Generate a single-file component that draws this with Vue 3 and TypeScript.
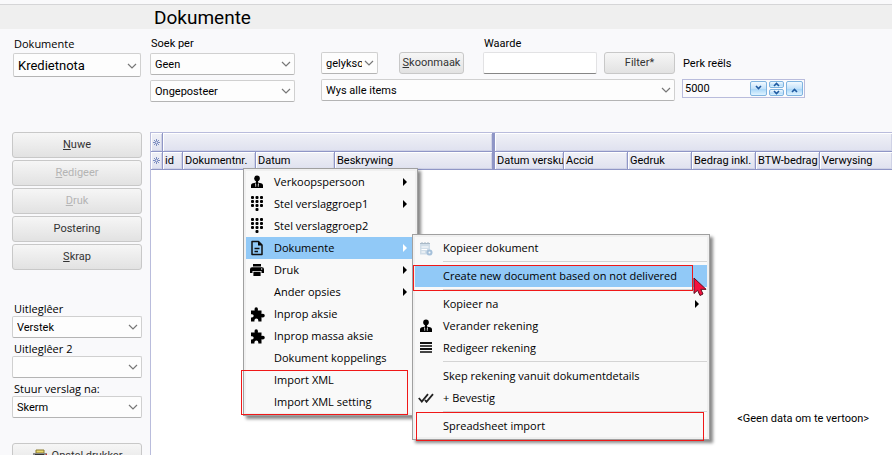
<script setup lang="ts">
import { ref } from 'vue'

interface ActionButton {
  key: string
  rest: string
  disabled?: boolean
}

interface MenuItem {
  label: string
  icon?: string
  arrow?: boolean
  active?: boolean
  divider?: boolean
}

const limit = ref('5000')
const searchValue = ref('')

const actions: ActionButton[] = [
  { key: 'N', rest: 'uwe' },
  { key: 'R', rest: 'edigeer', disabled: true },
  { key: 'D', rest: 'ruk', disabled: true },
  { key: '', rest: 'Postering' },
  { key: 'S', rest: 'krap' },
]

const reportFields = [
  { id: 'layout', label: 'Uitleglêer', value: 'Verstek' },
  { id: 'layout2', label: 'Uitleglêer 2', value: '' },
  { id: 'target', label: 'Stuur verslag na:', value: 'Skerm' },
]

const columns = [
  { label: 'id', cls: 'w-id' },
  { label: 'Dokumentnr.', cls: 'w-nr' },
  { label: 'Datum', cls: 'w-date' },
  { label: 'Beskrywing', cls: 'w-desc' },
  { label: 'Datum versku', cls: 'w-due' },
  { label: 'Accid', cls: 'w-std' },
  { label: 'Gedruk', cls: 'w-std' },
  { label: 'Bedrag inkl.', cls: 'w-std' },
  { label: 'BTW-bedrag', cls: 'w-std' },
  { label: 'Verwysing', cls: 'w-rest' },
]

const mainMenu: MenuItem[] = [
  { label: 'Verkoopspersoon', icon: 'person', arrow: true },
  { label: 'Stel verslaggroep1', icon: 'dots', arrow: true },
  { label: 'Stel verslaggroep2', icon: 'dots' },
  { label: 'Dokumente', icon: 'doc', arrow: true, active: true },
  { label: 'Druk', icon: 'print', arrow: true },
  { label: 'Ander opsies', arrow: true },
  { label: 'Inprop aksie', icon: 'plugin' },
  { label: 'Inprop massa aksie', icon: 'plugin' },
  { label: 'Dokument koppelings' },
  { label: 'Import XML' },
  { label: 'Import XML setting' },
]

const subMenu: MenuItem[] = [
  { label: 'Kopieer dokument', icon: 'copy' },
  { label: 'Create new document based on not delivered', active: true, divider: true },
  { label: 'Kopieer na', arrow: true, divider: true },
  { label: 'Verander rekening', icon: 'person' },
  { label: 'Redigeer rekening', icon: 'lines' },
  { label: 'Skep rekening vanuit dokumentdetails', divider: true },
  { label: '+ Bevestig', icon: 'checks' },
  { label: 'Spreadsheet import', divider: true },
]

const menus = [
  { name: 'main', items: mainMenu },
  { name: 'sub', items: subMenu },
]
</script>

<template>
  <div class="page">
    <svg class="defs" width="0" height="0" aria-hidden="true">
      <symbol id="i-chev" viewBox="0 0 10 6">
        <path d="M1 1l4 4 4-4" fill="none" stroke="#777" stroke-width="1.2" />
      </symbol>
      <symbol id="i-person" viewBox="0 0 14 14">
        <circle cx="7" cy="3.4" r="2.8" />
        <path d="M1 13V10.5Q1 8.4 4.2 8L6 7.4V6h2v1.4L9.8 8Q13 8.4 13 10.5V13Z" />
        <path d="M5 8L7 10 9 8 8.400 12H5.600Z" fill="#f9f9f9" />
        <path d="M6.300 8.500h1.400L8 12.500H6Z" />
      </symbol>
      <symbol id="i-dots" viewBox="0 0 14 16">
        <g>
          <rect x="1" y="0" width="3" height="3" rx="1" /><rect x="5.5" y="0" width="3" height="3" rx="1" /><rect x="10" y="0" width="3" height="3" rx="1" />
          <rect x="1" y="4" width="3" height="3" rx="1" /><rect x="5.5" y="4" width="3" height="3" rx="1" /><rect x="10" y="4" width="3" height="3" rx="1" />
          <rect x="1" y="8" width="3" height="3" rx="1" /><rect x="5.5" y="8" width="3" height="3" rx="1" /><rect x="10" y="8" width="3" height="3" rx="1" />
          <rect x="5.5" y="12" width="3" height="3" rx="1" />
        </g>
      </symbol>
      <symbol id="i-doc" viewBox="0 0 14 16">
        <path d="M2 1.500H8.500L12 5V14.500H2Z" fill="none" stroke="#111" stroke-width="1.5" stroke-linejoin="round" />
        <path d="M8 1.500v4h4Z" />
        <path d="M4.500 8.500H9.500M4.500 11.500H8" stroke="#111" stroke-width="1.4" />
      </symbol>
      <symbol id="i-print" viewBox="0 0 14 12">
        <path d="M3 0h8v2.500H3ZM2 3.200h10Q14 3.200 14 5.200V9H11.500V7H2.500V9H0V5.200Q0 3.200 2 3.200ZM3.400 7.800h7.200V12H3.400Z" />
        <circle cx="11.700" cy="5" r="0.700" fill="#fff" />
      </symbol>
      <symbol id="i-plugin" viewBox="0 0 15 15">
        <path d="M1 3.500H4.700Q4 .5 6.200.3 8.500.5 7.800 3.500H11.500V7Q14.800 6.200 14.800 8.700 14.600 11 11.500 10.300V14.500H8.300Q8.700 11.700 6.400 11.600 4 11.700 4.500 14.500H1V10.500Q3.600 11 3.700 8.800 3.600 6.700 1 7.300Z" />
      </symbol>
      <symbol id="i-copy" viewBox="0 0 14 15">
        <path d="M1 2.500H11V13.500H1Z" fill="#d0dde8" />
        <path d="M1 2.500H11M3 1v2M6 1v2M9 1v2" stroke="#a9b9c7" />
        <path d="M2.500 6H9.500M2.500 8.500H8M2.500 11H6" stroke="#fff" />
        <circle cx="10.500" cy="11.500" r="3" fill="#a5c0da" />
        <circle cx="10.500" cy="11.500" r="1" fill="#f4f7fa" />
      </symbol>
      <symbol id="i-lines" viewBox="0 0 12 12">
        <path d="M0 1H12M0 7H12" stroke="#111" stroke-width="2" />
        <path d="M0 4H12M0 10H12" stroke="#444" stroke-width="2" />
      </symbol>
      <symbol id="i-checks" viewBox="0 0 16 10">
        <path d="M.8 5L3.800 8.500 10 1.200M7 7L8.500 8.800 15 1.200" fill="none" stroke="#222" stroke-width="1.8" />
      </symbol>
      <symbol id="i-star" viewBox="0 0 9 9">
        <path d="M4.500 0V9M0 4.500H9M1.300 1.300L7.700 7.700M7.700 1.300L1.300 7.700" stroke="#5a70b0" stroke-width="1" />
        <circle cx="4.500" cy="4.500" r="1.200" fill="#e9eaf5" />
      </symbol>
    </svg>

    <header class="titlebar"><h1>Dokumente</h1></header>

    <section class="filters">
      <div class="field doc-type">
        <label class="ui" for="doctype">Dokumente</label>
        <div class="select tall">
          <select id="doctype"><option>Kredietnota</option></select>
          <svg><use href="#i-chev" /></svg>
        </div>
      </div>

      <div class="field search-by">
        <label for="searchby">Soek per</label>
        <div class="select">
          <select id="searchby"><option>Geen</option></select>
          <svg><use href="#i-chev" /></svg>
        </div>
        <div class="select second">
          <select aria-label="Status"><option>Ongeposteer</option></select>
          <svg><use href="#i-chev" /></svg>
        </div>
      </div>

      <div class="criteria">
        <div class="criteria-row">
          <div class="select operator">
            <select aria-label="Operator"><option>gelykso</option></select>
            <svg><use href="#i-chev" /></svg>
          </div>
          <button class="btn clear" type="button"><span><u>S</u>koonmaak</span></button>
          <div class="value">
            <label for="value">Waarde</label>
            <input id="value" v-model="searchValue" type="text" />
          </div>
          <button class="btn filter" type="button">Filter*</button>
        </div>
        <div class="select second">
          <select aria-label="Items"><option>Wys alle items</option></select>
          <svg><use href="#i-chev" /></svg>
        </div>
      </div>

      <div class="limit">
        <label for="limit">Perk reëls</label>
        <div class="spin">
          <input id="limit" v-model="limit" type="text" />
          <button type="button" class="sp" aria-label="Minder">
            <svg viewBox="0 0 15 13"><path d="M5 4L7.500 6.500 10 4" /></svg>
          </button>
          <span class="pair">
            <button type="button" class="sp" aria-label="Op"><svg viewBox="0 0 13 5"><path d="M4 4L6.500 1.500 9 4" /></svg></button>
            <button type="button" class="sp" aria-label="Af"><svg viewBox="0 0 13 5"><path d="M4 1L6.500 3.500 9 1" /></svg></button>
          </span>
          <button type="button" class="sp" aria-label="Meer">
            <svg viewBox="0 0 15 13"><path d="M5 10L7.500 7.500 10 10" /></svg>
          </button>
        </div>
      </div>
    </section>

    <main class="content">
      <aside class="side">
        <div class="actions">
          <button v-for="a in actions" :key="a.rest" class="btn" type="button" :disabled="a.disabled">
            <span><u>{{ a.key }}</u>{{ a.rest }}</span>
          </button>
        </div>
        <div class="reports">
          <div v-for="f in reportFields" :key="f.id" class="report">
            <label class="ui" :for="f.id">{{ f.label }}</label>
            <div class="select">
              <select :id="f.id"><option>{{ f.value }}</option></select>
              <svg><use href="#i-chev" /></svg>
            </div>
          </div>
        </div>
        <button class="btn printer" type="button">
          <svg viewBox="0 0 16 14">
            <path d="M4 1h8v3H4Z" fill="#e9d86c" stroke="#8a7a30" />
            <path d="M1 4h14v7H1Z" fill="#8a8a8a" />
            <path d="M3 5h9v5H3Z" fill="#333" />
            <path d="M3 10h10v3H3Z" fill="#ccc" />
            <path d="M14 5h1v1h-1Z" fill="#d22" />
          </svg>
          <span>Opstel drukker</span>
        </button>
      </aside>

      <div class="grid">
        <table>
          <colgroup>
            <col class="w-star" />
            <col v-for="c in columns" :key="c.label" :class="c.cls" />
          </colgroup>
          <thead>
            <tr>
              <th class="star"><svg><use href="#i-star" /></svg></th>
              <th colspan="4" class="band-end"></th>
              <th colspan="6"></th>
            </tr>
            <tr>
              <th class="star"><svg><use href="#i-star" /></svg></th>
              <th v-for="(c, i) in columns" :key="c.label" :class="{ 'band-end': i === 3 }">
                <div class="cell">{{ c.label }}</div>
              </th>
            </tr>
          </thead>
          <tbody>
            <tr><td colspan="11" class="empty">&lt;Geen data om te vertoon&gt;</td></tr>
          </tbody>
        </table>
      </div>
    </main>

    <div v-for="m in menus" :key="m.name" class="menu" :class="m.name" role="menu">
      <template v-for="item in m.items" :key="item.label">
        <hr v-if="item.divider" />
        <button class="item" :class="{ active: item.active }" type="button" role="menuitem">
          <span class="icon">
            <svg v-if="item.icon" :class="item.icon"><use :href="'#i-' + item.icon" /></svg>
          </span>
          <span class="text">{{ item.label }}</span>
          <svg v-if="item.arrow" class="arrow" viewBox="0 0 4 8"><path d="M0 0L4 4 0 8Z" /></svg>
        </button>
      </template>
    </div>

    <div class="mark mark-xml"></div>
    <div class="mark mark-create"></div>
    <div class="mark mark-sheet"></div>
    <svg class="pointer" viewBox="0 0 14 20">
      <path d="M1 1V16.500L4.600 13.300 7 18.500 10 17 7.800 12.300H13Z" fill="#f5103c" stroke="#5a1020" />
    </svg>
  </div>
</template>

<style>
body {
  margin: 0;
  background: #f9f9fb;
}
</style>

<style scoped>
.page {
  position: relative;
  display: flex;
  flex-direction: column;
  height: 100vh;
  box-sizing: border-box;
  padding-top: 4px;
  overflow: hidden;
  background: #f9f9fb;
  color: #000;
  font: 11px/14px Roboto, "Liberation Sans", sans-serif;
}
.page * {
  box-sizing: border-box;
}
.defs {
  position: absolute;
}
button,
input,
select {
  margin: 0;
  font: inherit;
  color: inherit;
}
.titlebar {
  flex: none;
  height: 25px;
  padding-left: 154px;
  border-top: 1px solid #d5d5d7;
  background: #efefef;
}
h1 {
  margin: 0;
  font-size: 19px;
  font-weight: 400;
  line-height: 25px;
}
label {
  display: block;
  white-space: nowrap;
}
.ui {
  font-family: "Open Sans", "Noto Sans", sans-serif;
}
.filters {
  flex: none;
  display: flex;
  align-items: flex-start;
  height: 103px;
  padding: 8px 0 0 13px;
}
.field label {
  height: 16px;
  padding-left: 1px;
}
.doc-type {
  width: 128px;
  margin-right: 9px;
}
.search-by {
  width: 145px;
  margin-right: 26px;
}
.select {
  position: relative;
  height: 22px;
}
.select select {
  display: block;
  width: 100%;
  height: 100%;
  padding: 1px 20px 0 4px;
  appearance: none;
  border: 1px solid #d0d0d0;
  border-bottom-color: #b4b4b4;
  border-radius: 2px;
  background: #fdfdfd;
}
.select svg {
  position: absolute;
  right: 4px;
  top: 8px;
  width: 10px;
  height: 6px;
  pointer-events: none;
}
.tall {
  height: 24px;
}
.tall select {
  font-size: 13px;
}
.tall svg {
  top: 10px;
}
.second {
  margin-top: 5px;
}
.criteria {
  width: 354px;
  margin-right: 7px;
}
.criteria-row {
  display: flex;
  align-items: flex-end;
}
.operator {
  width: 57px;
  margin-right: 21px;
}
.operator select {
  padding-right: 15px;
}
.btn {
  display: flex;
  align-items: center;
  justify-content: center;
  height: 22px;
  padding: 0;
  border: 1px solid #c8c8c8;
  border-radius: 3px;
  background: linear-gradient(#f6f6f6, #e2e2e2);
  color: #333;
}
.btn:disabled {
  color: #b4b4b4;
}
.clear {
  width: 65px;
  margin-right: 19px;
}
.value {
  flex: 1;
  margin-right: 7px;
}
.value label {
  height: 15px;
  padding-left: 1px;
}
.value input {
  display: block;
  width: 100%;
  height: 22px;
  padding: 0 4px;
  border: 1px solid #e2e2e4;
  border-bottom-color: #868686;
  border-radius: 2px;
  background: #fff;
}
.filter {
  width: 71px;
}
.limit {
  width: 123px;
  padding-top: 20px;
}
.limit label {
  height: 22px;
  padding-left: 1px;
}
.spin {
  display: flex;
  align-items: center;
  gap: 2px;
  height: 19px;
  padding-right: 1px;
  border: 1px solid #b9bcdc;
  background: #fbfbfd;
}
.spin input {
  flex: 1;
  min-width: 0;
  height: 17px;
  padding: 0 2px;
  border: 0;
  background: transparent;
}
.sp {
  display: block;
  width: 17px;
  height: 15px;
  padding: 0;
  border: 1px solid #7fb4e0;
  border-radius: 2px;
  background: linear-gradient(#f2faff, #c4e2fa 50%, #a8d6f8 55%, #e0f4ff);
}
.sp svg {
  display: block;
  width: 100%;
  height: 100%;
}
.sp path {
  fill: none;
  stroke: #1f5aa0;
  stroke-width: 1.6;
}
.pair {
  display: grid;
  gap: 1px;
}
.pair .sp {
  width: 15px;
  height: 7px;
}
.content {
  flex: 1;
  display: flex;
  min-height: 0;
}
.side {
  flex: none;
  width: 150px;
  padding: 0 8px 0 12px;
}
.actions {
  display: grid;
  gap: 2px;
}
.actions .btn {
  height: 26px;
}
.reports {
  display: grid;
  gap: 4px;
  padding-top: 32px;
}
.report label {
  height: 14px;
  padding-left: 2px;
}
.report {
  height: 36px;
}
.printer {
  gap: 4px;
  width: 100%;
  height: 26px;
  margin-top: 25px;
}
.printer svg {
  width: 16px;
  height: 14px;
}
.grid {
  flex: 1;
  min-width: 0;
  border-top: 1px solid #b9bcdc;
  border-left: 1px solid #b9bcdc;
  background: #fff;
}
table {
  width: 100%;
  table-layout: fixed;
  border-collapse: separate;
  border-spacing: 0;
}
.w-star { width: 12px; }
.w-id { width: 20px; }
.w-nr { width: 73px; }
.w-date { width: 79px; }
.w-desc { width: 160px; }
.w-due { width: 69px; }
.w-std { width: 64px; }
th {
  height: 19px;
  padding: 0;
  overflow: hidden;
  border-right: 1px solid #8f96c6;
  border-bottom: 1px solid #8f96c6;
  background: linear-gradient(#f0f1f7, #dfe1ef);
  box-shadow: inset 1px 1px #fff, inset -1px -1px #cfd2e6;
  font-weight: 400;
  text-align: left;
}
thead tr + tr th {
  height: 18px;
}
th:last-child {
  border-right: 0;
}
.band-end {
  border-right-width: 3px;
}
.star svg {
  display: block;
  width: 7px;
  height: 7px;
  margin: 0 auto;
}
.cell {
  margin: 0 0 0 2px;
  overflow: hidden;
  white-space: nowrap;
}
.empty {
  padding: 242px 23px 0 0;
  text-align: right;
}
.menu {
  position: absolute;
  padding: 2px;
  border: 1px solid #a0a0a0;
  background: #f9f9f9;
  box-shadow: inset 0 0 0 2px #f0f0f0, 3px 3px 3px #0007;
  font: 11px/22px "Open Sans", "Noto Sans", sans-serif;
}
.main {
  left: 243px;
  top: 168px;
  width: 175px;
}
.sub {
  left: 412px;
  top: 234px;
  width: 298px;
}
.item {
  display: flex;
  align-items: center;
  width: 100%;
  height: 22px;
  padding: 0 8px 0 0;
  border: 0;
  background: none;
  text-align: left;
  white-space: nowrap;
}
.item.active {
  background: #91c9f7;
}
.icon {
  flex: none;
  display: flex;
  align-items: center;
  justify-content: center;
  width: 22px;
  margin-right: 6px;
}
.text {
  flex: 1;
}
.icon svg { width: 14px; height: 14px; }
.icon .dots,
.icon .doc { height: 16px; }
.icon .print { height: 12px; }
.icon .plugin { width: 15px; height: 15px; }
.icon .copy { height: 15px; }
.icon .lines { width: 12px; height: 12px; }
.icon .checks { width: 16px; height: 10px; }
.arrow {
  width: 4px;
  height: 8px;
}
.main .active .arrow {
  fill: #fff;
}
hr {
  height: 1px;
  margin: 2px 0 3px 28px;
  border: 0;
  background: #d4d4d4;
}
.mark {
  position: absolute;
  border: 1px solid #f01818;
  pointer-events: none;
}
.mark-xml {
  left: 241px;
  top: 370px;
  width: 167px;
  height: 45px;
}
.mark-create {
  left: 413px;
  top: 265px;
  width: 280px;
  height: 26px;
}
.mark-sheet {
  left: 416px;
  top: 412px;
  width: 288px;
  height: 29px;
}
.pointer {
  position: absolute;
  left: 693px;
  top: 277px;
  width: 14px;
  height: 20px;
}
</style>
